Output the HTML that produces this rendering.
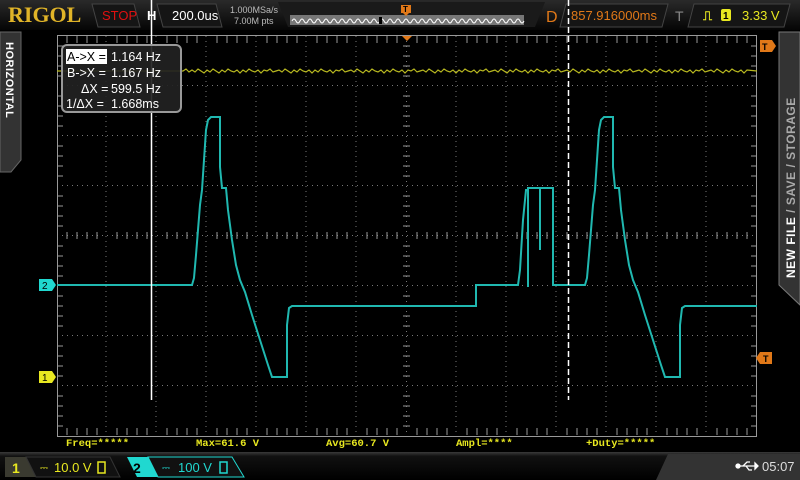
<!DOCTYPE html>
<html><head><meta charset="utf-8"><style>
html,body{margin:0;padding:0;background:#000;width:800px;height:480px;overflow:hidden;font-family:"Liberation Sans",sans-serif}
svg{position:absolute;left:0;top:0}
</style></head><body>
<svg width="800" height="480" viewBox="0 0 800 480" xmlns="http://www.w3.org/2000/svg">
<defs>
<linearGradient id="tb" x1="0" y1="0" x2="0" y2="1"><stop offset="0" stop-color="#2a2a2a"/><stop offset="1" stop-color="#050505"/></linearGradient>
<linearGradient id="bb" x1="0" y1="0" x2="0" y2="1"><stop offset="0" stop-color="#3a3a3a"/><stop offset="0.15" stop-color="#111"/><stop offset="1" stop-color="#000"/></linearGradient>
</defs>
<rect width="800" height="480" fill="#000"/>
<rect x="0" y="0" width="800" height="30" fill="url(#tb)"/>
<text x="8" y="22" font-family="Liberation Serif,serif" font-weight="bold" font-size="22" fill="#e0b428">RIGOL</text>
<polygon points="92,4 134,4 140,27 98,27" fill="#151515" stroke="#444"/>
<text x="102" y="20" font-size="13" fill="#e01010">STOP</text>
<text x="147" y="20" font-size="13" font-weight="bold" fill="#fff">H</text>
<polygon points="157,4 216,4 222,27 163,27" fill="#151515" stroke="#444"/>
<text x="172" y="20" font-size="13" fill="#fff">200.0us</text>
<text x="230" y="13" font-size="9" fill="#bbb">1.000MSa/s</text>
<text x="234" y="24" font-size="9" fill="#bbb">7.00M pts</text>
<polygon points="278,2 545,2 535,27 288,27" fill="#1a1a1a"/>
<rect x="290" y="15" width="234" height="10" fill="#777"/>
<path d="M292,21 q2,-4 4,0 t4,0 t4,0 t4,0 t4,0 t4,0 t4,0 t4,0 t4,0 t4,0 t4,0 t4,0 t4,0 t4,0 t4,0 t4,0 t4,0 t4,0 t4,0 t4,0 t4,0 t4,0 t4,0 t4,0 t4,0 t4,0 t4,0 t4,0 t4,0 t4,0 t4,0 t4,0 t4,0 t4,0 t4,0 t4,0 t4,0 t4,0 t4,0 t4,0 t4,0 t4,0 t4,0 t4,0 t4,0 t4,0 t4,0 t4,0 t4,0 t4,0 t4,0 t4,0 t4,0 t4,0 t4,0 t4,0 t4,0 t4,0" fill="none" stroke="#fff" stroke-width="1"/>
<rect x="379" y="17" width="3" height="7" fill="#000"/>
<rect x="401" y="5" width="10" height="8" fill="#e07818"/><text x="403" y="12" font-size="8" font-weight="bold" fill="#000">T</text>
<polygon points="403,13 409,13 406,16" fill="#e07818"/>
<text x="546" y="22" font-size="16" fill="#e07818">D</text>
<polygon points="566,4 668,4 662,27 560,27" fill="#151515" stroke="#444"/>
<text x="571" y="20" font-size="13" fill="#e07818">857.916000ms</text>
<text x="675" y="21" font-size="14" fill="#888">T</text>
<polygon points="694,4 790,4 784,27 688,27" fill="#151515" stroke="#444"/>
<text x="703" y="20" font-size="13" font-weight="bold" fill="#e8e820">⎍</text>
<rect x="721" y="9" width="10" height="12" rx="2" fill="#e8e820"/><text x="723" y="19" font-size="10" font-weight="bold" fill="#000">1</text>
<text x="742" y="20" font-size="13" fill="#e8e820">3.33 V</text>
<g stroke="#777" stroke-width="1" stroke-dasharray="1,4" fill="none">
<path d="M106,36V436M156,36V436M206,36V436M256,36V436M306,36V436M356,36V436M406.5,36V436M456,36V436M506,36V436M556,36V436M606,36V436M656,36V436M706,36V436"/>
<path d="M57,85.5H757M57,135.5H757M57,185.5H757M57,235.5H757M57,285.5H757M57,335.5H757M57,385.5H757"/>
</g>
<g stroke="#999" stroke-width="1">
<path id="ht" d="M67,232V239M77,232V239M87,232V239M97,232V239M117,232V239M127,232V239M137,232V239M147,232V239M167,232V239M177,232V239M187,232V239M197,232V239M217,232V239M227,232V239M237,232V239M247,232V239M267,232V239M277,232V239M287,232V239M297,232V239M317,232V239M327,232V239M337,232V239M347,232V239M367,232V239M377,232V239M387,232V239M397,232V239M417,232V239M427,232V239M437,232V239M447,232V239M467,232V239M477,232V239M487,232V239M497,232V239M517,232V239M527,232V239M537,232V239M547,232V239M567,232V239M577,232V239M587,232V239M597,232V239M617,232V239M627,232V239M637,232V239M647,232V239M667,232V239M677,232V239M687,232V239M697,232V239M717,232V239M727,232V239M737,232V239M747,232V239"/>
<use href="#ht" transform="translate(0,-196)"/>
<use href="#ht" transform="translate(0,196)"/>
<path d="M403,46H410M403,56H410M403,66H410M403,76H410M403,96H410M403,106H410M403,116H410M403,126H410M403,146H410M403,156H410M403,166H410M403,176H410M403,196H410M403,206H410M403,216H410M403,226H410M403,246H410M403,256H410M403,266H410M403,276H410M403,296H410M403,306H410M403,316H410M403,326H410M403,346H410M403,356H410M403,366H410M403,376H410M403,396H410M403,406H410M403,416H410M403,426H410"/>
<path d="M57,46H63M57,56H63M57,66H63M57,76H63M57,96H63M57,106H63M57,116H63M57,126H63M57,146H63M57,156H63M57,166H63M57,176H63M57,196H63M57,206H63M57,216H63M57,226H63M57,246H63M57,256H63M57,266H63M57,276H63M57,296H63M57,306H63M57,316H63M57,326H63M57,346H63M57,356H63M57,366H63M57,376H63M57,396H63M57,406H63M57,416H63M57,426H63"/>
<path d="M751,46H757M751,56H757M751,66H757M751,76H757M751,96H757M751,106H757M751,116H757M751,126H757M751,146H757M751,156H757M751,166H757M751,176H757M751,196H757M751,206H757M751,216H757M751,226H757M751,246H757M751,256H757M751,266H757M751,276H757M751,296H757M751,306H757M751,316H757M751,326H757M751,346H757M751,356H757M751,366H757M751,376H757M751,396H757M751,406H757M751,416H757M751,426H757"/>
</g>
<rect x="57.5" y="35.5" width="699" height="401" fill="none" stroke="#999"/>
<path d="M57,71H183 L186,69 L189,72 L192,70 L195,72 L198,69 L201,71 L204,73 L207,70 L210,72 L213,69 L216,71 L219,73 L222,70 L225,72 L228,69 L231,71 L234,72 L237,70 L240,73 L243,70 L246,72 L249,69 L252,71 L255,72 L258,70 L261,73 L264,70 L267,71 L270,69 L273,72 L276,71 L279,70 L282,72 L285,69 L288,71 L291,73 L294,70 L297,72 L300,69 L303,71 L306,72 L309,70 L312,73 L315,70 L318,72 L321,69 L324,71 L327,72 L330,70 L333,73 L336,70 L339,71 L342,69 L345,72 L348,71 L351,70 L354,72 L357,69 L360,71 L363,73 L366,70 L369,72 L372,69 L375,71 L378,72 L381,70 L384,73 L387,70 L390,72 L393,69 L396,71 L399,72 L402,70 L405,73 L408,70 L411,71 L414,69 L417,72 L420,71 L423,70 L426,72 L429,69 L432,71 L435,73 L438,70 L441,72 L444,69 L447,71 L450,72 L453,70 L456,73 L459,70 L462,72 L465,69 L468,71 L471,72 L474,70 L477,73 L480,70 L483,71 L486,69 L489,72 L492,71 L495,70 L498,72 L501,69 L504,71 L507,73 L510,70 L513,72 L516,69 L519,71 L522,72 L525,70 L528,73 L531,70 L534,72 L537,69 L540,71 L543,72 L546,70 L549,73 L552,70 L555,71 L558,69 L561,72 L564,71 L567,70 L570,72 L573,69 L576,71 L579,73 L582,70 L585,72 L588,69 L591,71 L594,72 L597,70 L600,73 L603,70 L606,72 L609,69 L612,71 L615,72 L618,70 L621,73 L624,70 L627,71 L630,69 L633,72 L636,71 L639,70 L642,72 L645,69 L648,71 L651,73 L654,70 L657,72 L660,69 L663,71 L666,72 L669,70 L672,73 L675,70 L678,72 L681,69 L684,71 L687,72 L690,70 L693,73 L696,70 L699,71 L702,69 L705,72 L708,71 L711,70 L714,72 L717,69 L720,71 L723,73 L726,70 L729,72 L732,69 L735,71 L738,72 L741,70 L744,73 L747,70 L757,71" fill="none" stroke="#b8b820" stroke-width="1.2"/>
<path d="M57,285H192 L194,278 L196,255 L198,230 L200,205 L202,190 L204,160 L206,130 L208,120 L211,117 H220 V167 L222,188 H226 L228,210 L232,240 L236,265 L240,280 L245,292 L252,315 L260,340 L268,365 L272,377 H287 V325 L289,308 L292,306 H476 V285 H518 L520,270 L523,220 L526,190 H528 V287 V188 H540 V250 V188 H553 V285 H585 L587,278 L589,255 L591,230 L593,205 L595,190 L597,160 L599,130 L601,120 L604,117 H613 V167 L615,188 H619 L621,210 L625,240 L629,265 L633,280 L638,292 L645,315 L653,340 L661,365 L665,377 H680 V325 L682,308 L685,306 H757" fill="none" stroke="#20b8b0" stroke-width="2"/>
<line x1="151.5" y1="0" x2="151.5" y2="400" stroke="#fff" stroke-width="1.5"/>
<line x1="568.5" y1="0" x2="568.5" y2="400" stroke="#fff" stroke-width="1.5" stroke-dasharray="6,3"/>
<polygon points="402,36 412,36 407,41" fill="#e07818"/>
<polygon points="39,279 52,279 56,285 52,291 39,291" fill="#20d8d0"/><text x="42" y="289" font-size="10" fill="#000">2</text>
<polygon points="39,371 52,371 56,377 52,383 39,383" fill="#e8e820"/><text x="42" y="381" font-size="10" fill="#000">1</text>
<polygon points="772,40 760,40 760,52 772,52 776,46" fill="#e07818"/><text x="762" y="50" font-size="9" font-weight="bold" fill="#000">T</text>
<polygon points="772,352 760,352 760,364 772,364" fill="#e07818"/><polygon points="760,352 756,358 760,364" fill="#e07818"/><text x="763" y="362" font-size="9" font-weight="bold" fill="#000">T</text>
<rect x="62" y="45" width="119" height="67" rx="5" fill="#222" fill-opacity="0.92" stroke="#999" stroke-width="2"/>
<rect x="66" y="49" width="41" height="15" fill="#fff"/>
<g font-size="12.5" fill="#fff">
<text x="67" y="61" fill="#000">A-&gt;X =</text><text x="111" y="61">1.164 Hz</text>
<text x="67" y="77">B-&gt;X =</text><text x="111" y="77">1.167 Hz</text>
<text x="81" y="93">ΔX =</text><text x="111" y="93">599.5 Hz</text>
<text x="66" y="108">1/ΔX =</text><text x="111" y="108">1.668ms</text>
</g>
<polygon points="0,32 21,32 21,160 11,172 0,172" fill="#333" stroke="#666"/>
<text transform="translate(6,42) rotate(90)" font-size="11" font-weight="bold" fill="#fff" letter-spacing="0.5">HORIZONTAL</text>
<polygon points="779,32 800,32 800,305 779,285" fill="#333" stroke="#777"/>
<text transform="translate(795,278) rotate(-90)" font-size="12" font-weight="bold" fill="#fff" letter-spacing="0.5">NEW FILE <tspan fill="#aaa">/ SAVE / STORAGE</tspan></text>
<g font-family="Liberation Mono,monospace" font-weight="bold" font-size="10.5" fill="#e8e820">
<text x="66" y="446">Freq=*****</text>
<text x="196" y="446">Max=61.6 V</text>
<text x="326" y="446">Avg=60.7 V</text>
<text x="456" y="446">Ampl=****</text>
<text x="586" y="446">+Duty=*****</text>
</g>
<rect x="0" y="452" width="800" height="28" fill="url(#bb)"/>
<polygon points="668,454 800,454 800,480 656,480" fill="#333"/>
<polygon points="5,457 26,457 36,477 5,477" fill="#3a3a30"/>
<text x="12" y="473" font-size="14" font-weight="bold" fill="#e8e820">1</text>
<polygon points="26,457 110,457 120,477 36,477" fill="#111" stroke="#333"/>
<text x="40" y="471" font-size="10" fill="#e8e820">⎓</text>
<text x="54" y="472" font-size="13" fill="#e8e820">10.0 V</text>
<rect x="98" y="462" width="7" height="11" fill="none" stroke="#e8e820" stroke-width="1.5"/>
<polygon points="127,457 148,457 158,477 137,477" fill="#20d8d0"/>
<text x="133" y="473" font-size="14" font-weight="bold" fill="#000">2</text>
<polygon points="148,457 232,457 244,477 158,477" fill="#111" stroke="#20d8d0"/>
<text x="162" y="471" font-size="10" fill="#20d8d0">⎓</text>
<text x="178" y="472" font-size="13" fill="#20d8d0">100 V</text>
<rect x="220" y="462" width="7" height="11" fill="none" stroke="#20d8d0" stroke-width="1.5"/>
<g stroke="#fff" stroke-width="1.3" fill="#fff">
<line x1="738" y1="466" x2="755" y2="466"/><circle cx="738" cy="466" r="2"/>
<path d="M743,466 L747,462 H750 M746,466 L749,470 H752" fill="none"/>
<polygon points="755,463 758,466 755,469"/>
</g>
<text x="762" y="471" font-size="13" fill="#ddd">05:07</text>
</svg>
</body></html>
